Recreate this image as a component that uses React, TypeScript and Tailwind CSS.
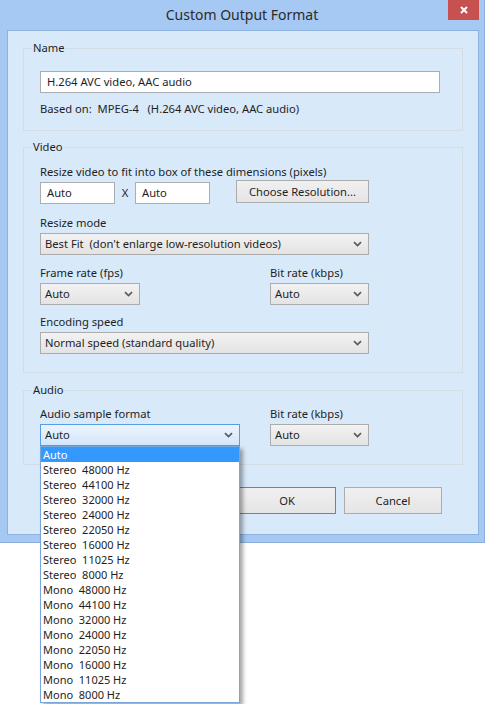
import type { ReactNode } from 'react';

const font = "font-['Segoe_UI','Noto_Sans',sans-serif]";

function Chevron() {
  return (
    <svg width="9" height="6" viewBox="0 0 9 6" className="shrink-0">
      <path d="M1 1.2 L4.5 4.5 L8 1.2" fill="none" stroke="#5a5a5a" strokeWidth="1.7" />
    </svg>
  );
}

function Select({ value, width, focused }: { value: string; width: string; focused?: boolean }) {
  return (
    <div
      className={`${width} h-[22px] mt-[2px] flex items-center justify-between pl-[4px] pr-[6px] border ${
        focused
          ? 'border-[#569de5] bg-gradient-to-b from-[#ecf4fc] to-[#d2e6fb]'
          : 'border-[#acacac] bg-gradient-to-b from-[#f2f2f2] to-[#e3e3e3]'
      }`}
    >
      <span className="whitespace-pre">{value}</span>
      <Chevron />
    </div>
  );
}

function TextBox({ value, width }: { value: string; width: string }) {
  return (
    <div className={`${width} h-[22px] flex items-center pl-[6px] bg-white border border-[#abadb3]`}>
      {value}
    </div>
  );
}

function Group({ title, className, children }: { title: string; className: string; children: ReactNode }) {
  return (
    <fieldset className={`ml-[15px] w-[440px] border border-[#d3dde6] ${className}`}>
      <legend className="ml-[8px] px-[1px] leading-[16px]">{title}</legend>
      <div className="pl-[16px]">{children}</div>
    </fieldset>
  );
}

function Button({ label, isDefault }: { label: string; isDefault?: boolean }) {
  return (
    <div
      className={`w-[98px] h-[27px] flex items-center justify-center border bg-gradient-to-b from-[#f0f0f0] to-[#e5e5e5] ${
        isDefault ? 'border-[#3c8fe6]' : 'border-[#acacac]'
      }`}
    >
      {label}
    </div>
  );
}

const sampleFormats = [
  'Auto',
  'Stereo  48000 Hz',
  'Stereo  44100 Hz',
  'Stereo  32000 Hz',
  'Stereo  24000 Hz',
  'Stereo  22050 Hz',
  'Stereo  16000 Hz',
  'Stereo  11025 Hz',
  'Stereo  8000 Hz',
  'Mono  48000 Hz',
  'Mono  44100 Hz',
  'Mono  32000 Hz',
  'Mono  24000 Hz',
  'Mono  22050 Hz',
  'Mono  16000 Hz',
  'Mono  11025 Hz',
  'Mono  8000 Hz',
];

export default function App() {
  return (
    <div className={`relative w-[486px] h-[704px] bg-white text-[11.2px] leading-[16px] text-[#1e1e1e] ${font}`}>
      {/* window frame */}
      <div className="w-[485px] h-[543px] bg-[#a5c9f2] border-r border-b border-[#8aafdd] flex flex-col">
        <div className="relative h-[30px] flex items-center justify-center">
          <span className="text-[14px] text-[#2b2b2b]">Custom Output Format</span>
          <div className="absolute top-0 right-[5px] w-[31px] h-[20px] bg-[#c75050] flex items-center justify-center">
            <svg width="8" height="8" viewBox="0 0 8 8">
              <path d="M1 1 L7 7 M7 1 L1 7" stroke="#fff" strokeWidth="2" />
            </svg>
          </div>
        </div>

        {/* client area */}
        <div className="ml-[7px] w-[472px] h-[505px] bg-[#d8e9f9] border border-[#8db2e0]">
          <Group title="Name" className="mt-[9px] pb-[13px]">
            <div className="pt-[15px]">
              <TextBox value="H.264 AVC video, AAC audio" width="w-[400px]" />
            </div>
            <div className="mt-[8px] whitespace-pre">Based on:  MPEG-4   (H.264 AVC video, AAC audio)</div>
          </Group>

          <Group title="Video" className="mt-[8px] pb-[18px]">
            <div className="pt-[9px]">Resize video to fit into box of these dimensions (pixels)</div>
            <div className="flex items-start">
              <div className="mt-[2px]">
                <TextBox value="Auto" width="w-[75px]" />
              </div>
              <div className="mt-[2px] w-[20px] h-[22px] flex items-center justify-center">X</div>
              <div className="mt-[2px]">
                <TextBox value="Auto" width="w-[75px]" />
              </div>
              <div className="ml-[26px] w-[133px] h-[23px] flex items-center justify-center border border-[#acacac] bg-gradient-to-b from-[#f0f0f0] to-[#e5e5e5]">
                Choose Resolution...
              </div>
            </div>
            <div className="mt-[11px]">Resize mode</div>
            <Select value="Best Fit  (don't enlarge low-resolution videos)" width="w-[329px]" />
            <div className="mt-[10px] grid grid-cols-[230px_1fr]">
              <div>
                <div>Frame rate (fps)</div>
                <Select value="Auto" width="w-[100px]" />
              </div>
              <div>
                <div>Bit rate (kbps)</div>
                <Select value="Auto" width="w-[99px]" />
              </div>
            </div>
            <div className="mt-[9px]">Encoding speed</div>
            <Select value="Normal speed (standard quality)" width="w-[329px]" />
          </Group>

          <Group title="Audio" className="mt-[9px] pb-[18px]">
            <div className="pt-[8px] grid grid-cols-[230px_1fr]">
              <div>
                <div>Audio sample format</div>
                <Select value="Auto" width="w-[200px]" focused />
              </div>
              <div>
                <div>Bit rate (kbps)</div>
                <Select value="Auto" width="w-[99px]" />
              </div>
            </div>
          </Group>

          <div className="mt-[22px] pr-[36px] flex justify-end gap-[8px]">
            <Button label="OK" isDefault />
            <Button label="Cancel" />
          </div>
        </div>
      </div>

      {/* open dropdown list */}
      <div className="absolute left-[40px] top-[446px] w-[200px] bg-white border border-[#7aa5d8] shadow-[3px_3px_4px_rgba(0,0,0,0.35)] text-[11px]">
        {sampleFormats.map((f, i) => (
          <div
            key={f}
            className={`h-[15px] flex items-center pl-[2px] pt-[1px] whitespace-pre ${i === 0 ? 'bg-[#3399ff] text-white' : ''}`}
          >
            {f}
          </div>
        ))}
      </div>
    </div>
  );
}
